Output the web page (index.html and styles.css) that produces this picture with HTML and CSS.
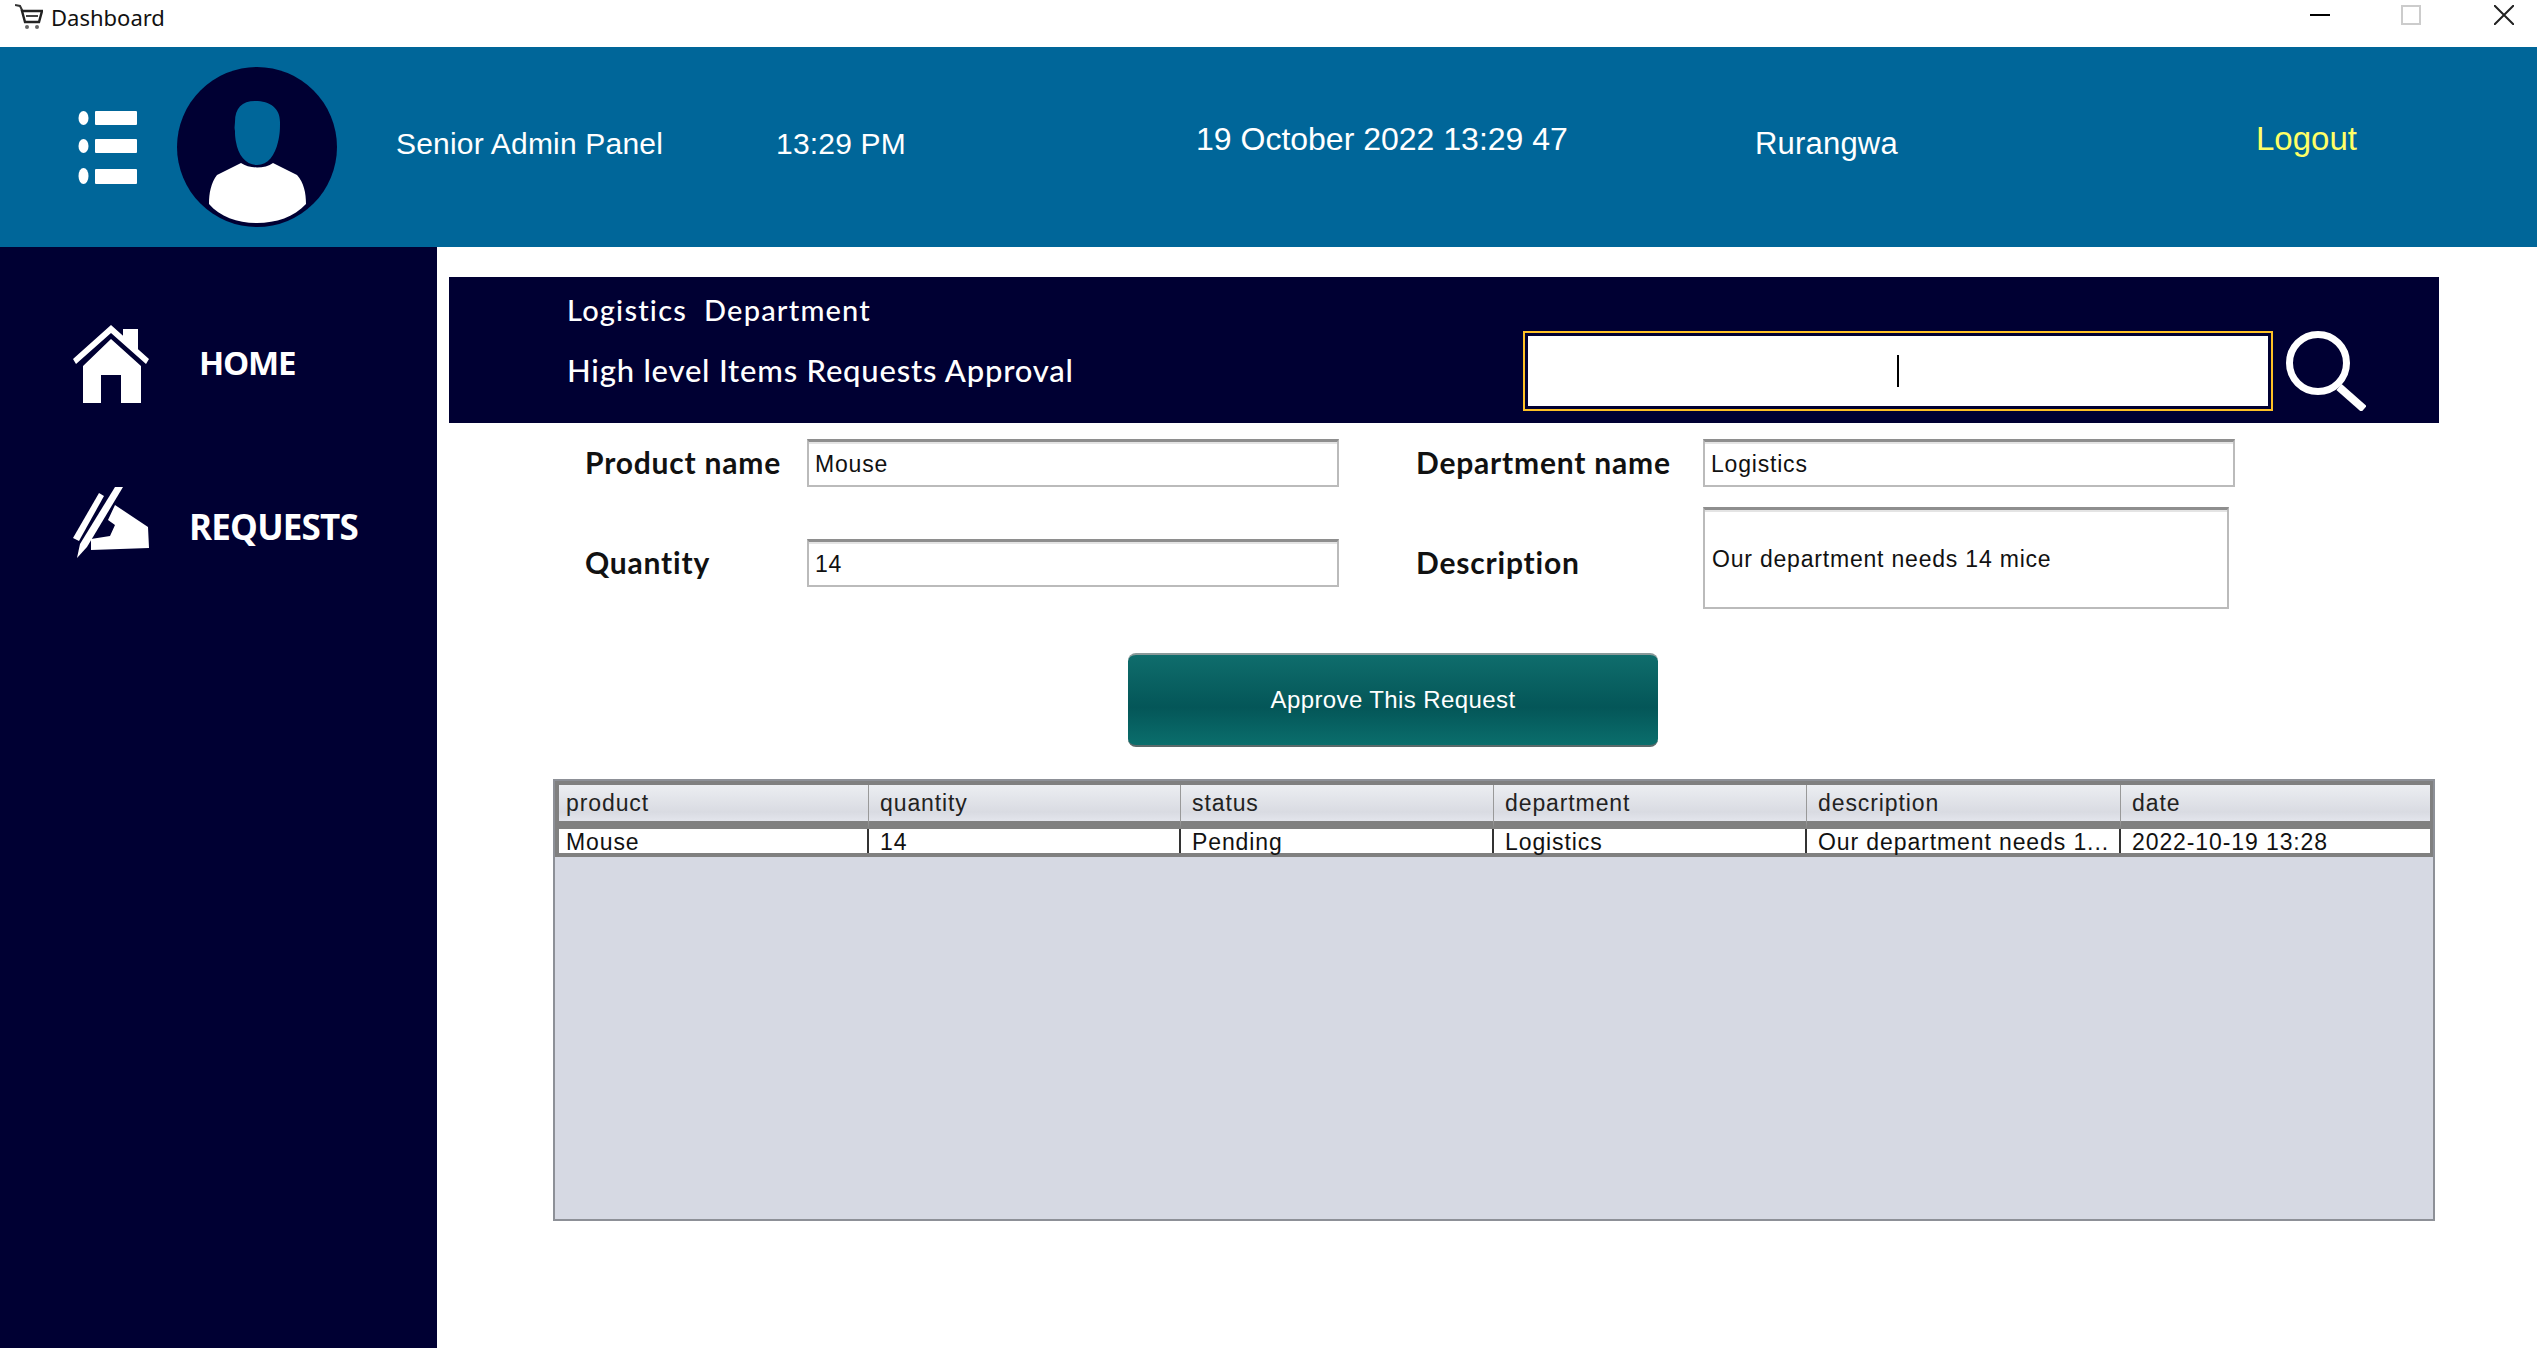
FILE: index.html
```html
<!DOCTYPE html>
<html lang="en">
<head>
    <meta charset="UTF-8">
    <title>Dashboard</title>
    <link rel="stylesheet" href="styles.css">
</head>
<body>
    <div class="titlebar">
        <svg class="cart-icon" viewBox="0 0 28 25" width="28" height="25">
            <path d="M0 1l5 1 3 6" fill="none" stroke="#333" stroke-width="2"/>
            <path d="M7 7h20l-3 11H10z" fill="none" stroke="#222" stroke-width="2.4"/>
            <path d="M11 11h12v2H11z" fill="#444"/>
            <circle cx="12" cy="23" r="2" fill="#666"/>
            <circle cx="22" cy="23" r="2" fill="#666"/>
        </svg>
        <span class="app-title">Dashboard</span>
        <div class="window-buttons">
            <svg viewBox="0 0 20 20" width="20" height="20"><path d="M0 10h20" stroke="#000" stroke-width="2"/></svg>
            <svg viewBox="0 0 20 20" width="20" height="20"><rect x="1" y="1" width="18" height="18" fill="none" stroke="#ccc" stroke-width="2"/></svg>
            <svg viewBox="0 0 20 20" width="20" height="20"><path d="M0 0l20 20M20 0L0 20" stroke="#222" stroke-width="2"/></svg>
        </div>
    </div>

    <header class="topbar">
        <svg class="menu-icon" viewBox="0 0 59 73" width="59" height="73">
            <g fill="#fff">
                <ellipse cx="5.5" cy="7" rx="5" ry="7"/><rect x="17" y="0" width="42" height="14" rx="1"/>
                <ellipse cx="5.5" cy="35" rx="5" ry="7"/><rect x="17" y="28" width="42" height="14" rx="1"/>
                <ellipse cx="5.5" cy="65" rx="5" ry="8"/><rect x="17" y="58" width="42" height="15" rx="1"/>
            </g>
        </svg>
        <svg class="avatar" viewBox="0 0 160 160" width="160" height="160">
            <circle cx="80" cy="80" r="80" fill="#000033"/>
            <path d="M64 96c8 6 24 6 32 0l24 12c7 8 9 18 9 29-12 13-30 19-49 19s-37-6-48-19c0-11 2-21 8-29z" fill="#fff"/>
            <path d="M78 34c15 0 25 7 25 21 0 7 0 12-2 20-3 13-10 23-21 23s-19-10-21-23c-1-6-1-8-1-11-1-4 0-6 0-9 0-14 7-21 20-21z" fill="#006699"/>
        </svg>
        <div class="top-text">Senior Admin Panel</div>
        <div class="top-text">13:29 PM</div>
        <div class="top-text raised date-text">19 October 2022 13:29 47</div>
        <div class="top-text name-text">Rurangwa</div>
        <div class="top-text raised logout">Logout</div>
    </header>

    <div class="main">
        <nav class="sidebar">
            <a class="nav-item">
                <svg viewBox="0 0 76 78" width="76" height="78">
                    <g fill="#fff">
                        <path d="M50 4h15v24L50 13z"/>
                        <path d="M0 34L38 0l38 34-3 5-35-31L3 39z"/>
                        <path d="M38 14l30 27v37H48V50H28v28H10V41z"/>
                    </g>
                </svg>
                <span class="nav-label home-label">HOME</span>
            </a>
            <a class="nav-item">
                <svg viewBox="0 0 76 71" width="76" height="71">
                    <g fill="#fff">
                        <path d="M26 6l5 3L6 54l-6-3z"/>
                        <path d="M42 0h8L14 60 4 71l3-14z"/>
                        <path d="M42 18l33 22 1 21-58 2 0-11 19-3 5-11-7-5z"/>
                    </g>
                </svg>
                <span class="nav-label requests-label">REQUESTS</span>
            </a>
        </nav>

        <section class="content">
            <div class="panel">
                <div class="panel-titles">
                    <div class="panel-title first-title">Logistics&nbsp; Department</div>
                    <div class="panel-title">High level Items Requests Approval</div>
                </div>
                <div class="search-box"><span class="caret"></span></div>
                <svg class="search-icon" viewBox="0 0 80 80" width="80" height="80">
                    <circle cx="32" cy="32" r="28.5" fill="none" stroke="#fff" stroke-width="7"/>
                    <path d="M53 56l25 22" stroke="#fff" stroke-width="8"/>
                </svg>
            </div>

            <div class="form-grid">
                <div class="field-label">Product name</div>
                <div class="field">Mouse</div>
                <div></div>
                <div class="field-label">Department name</div>
                <div class="field">Logistics</div>

                <div class="field-label low-label">Quantity</div>
                <div class="field qty-field">14</div>
                <div></div>
                <div class="field-label low-label">Description</div>
                <div class="field desc-field">Our department needs 14 mice</div>
            </div>

            <button class="approve-btn">Approve This Request</button>

            <div class="table-wrap">
                <table class="requests-table">
                    <thead>
                        <tr>
                            <th>product</th>
                            <th>quantity</th>
                            <th>status</th>
                            <th>department</th>
                            <th>description</th>
                            <th>date</th>
                        </tr>
                    </thead>
                    <tbody>
                        <tr>
                            <td><div class="cell">Mouse</div></td>
                            <td><div class="cell">14</div></td>
                            <td><div class="cell">Pending</div></td>
                            <td><div class="cell">Logistics</div></td>
                            <td><div class="cell">Our department needs 1...</div></td>
                            <td><div class="cell">2022-10-19 13:28</div></td>
                        </tr>
                    </tbody>
                </table>
            </div>
        </section>
    </div>
</body>
</html>
```

FILE: styles.css
```css
body {
    margin: 0;
    height: 1348px;
    overflow: hidden;
    background-color: #fff;
    font-family: "Liberation Sans", Arial, sans-serif;
}

/* window title */
.titlebar {
    height: 47px;
    display: flex;
    align-items: center;
    padding-left: 15px;
    position: relative;
}

.cart-icon {
    margin-top: -14px;
}

.app-title {
    font-family: "Noto Sans", sans-serif;
    font-size: 22px;
    color: #111;
    margin-left: 8px;
    margin-top: -13px;
}

.window-buttons {
    margin-left: auto;
    margin-right: 23px;
    margin-top: -17px;
    display: flex;
    gap: 71px;
}

.window-buttons svg:nth-child(2) {
    margin-right: 2px;
}

/* blue header */
.topbar {
    height: 200px;
    background-color: #006699;
    display: grid;
    grid-template-columns: 99px 219px 380px 420px 559px 501px 1fr;
    align-items: center;
    padding-left: 78px;
    box-sizing: border-box;
}

.top-text {
    color: #fff;
    font-size: 30px;
    letter-spacing: 0.2px;
    padding-bottom: 6px;
    white-space: nowrap;
}

.raised {
    padding-bottom: 16px;
}

.date-text {
    font-size: 32px;
    letter-spacing: 0;
}

.name-text {
    font-size: 31px;
}

.logout {
    color: #ffff66;
    font-size: 33px;
    letter-spacing: 0;
}

.main {
    display: flex;
    height: 1101px;
}

/* left menu */
.sidebar {
    width: 437px;
    background-color: #000033;
    box-sizing: border-box;
    padding-top: 78px;
    padding-left: 73px;
}

.nav-item {
    display: flex;
    align-items: center;
    color: #fff;
    height: 78px;
    margin-bottom: 80px;
}

.nav-label {
    font-family: "Open Sans", sans-serif;
    font-weight: 700;
    font-size: 35px;
}

.home-label {
    margin-left: 50px;
    padding-bottom: 3px;
    font-size: 33px;
    letter-spacing: -1.2px;
}

.requests-label {
    margin-left: 40px;
    padding-top: 9px;
    letter-spacing: -0.8px;
}

/* content */
.content {
    flex: 1;
    padding: 30px 0 0 9px;
}

.panel {
    width: 1990px;
    height: 146px;
    margin-left: 3px;
    background-color: #000033;
    display: flex;
    box-sizing: border-box;
    padding-left: 118px;
}

.panel-titles {
    width: 956px;
    padding-top: 3px;
}

.panel-title {
    font-family: Lato, sans-serif;
    color: #fff;
    font-size: 31px;
    font-weight: 500;
    line-height: 60px;
    letter-spacing: 0.8px;
    white-space: nowrap;
}

.first-title {
    font-size: 29px;
    letter-spacing: 1.2px;
}

.search-box {
    width: 750px;
    height: 80px;
    margin-top: 54px;
    background-color: #fff;
    border: 2px solid #ffc125;
    outline: 3px solid #000033;
    outline-offset: -5px;
    box-sizing: border-box;
    display: flex;
    align-items: center;
    justify-content: center;
}

.caret {
    width: 2px;
    height: 32px;
    background-color: #000;
}

.search-icon {
    margin-left: 13px;
    margin-top: 54px;
}

.form-grid {
    display: grid;
    grid-template-columns: 222px 532px 77px 287px 532px;
    grid-template-rows: 48px 102px;
    row-gap: 20px;
    align-items: center;
    margin: 16px 0 0 139px;
}

.field-label {
    font-family: Lato, sans-serif;
    font-weight: 700;
    font-size: 30px;
    letter-spacing: 0.8px;
    color: #111;
    white-space: nowrap;
    padding-bottom: 3px;
}

.low-label {
    padding-bottom: 0;
    padding-top: 7px;
}

.field {
    height: 48px;
    box-sizing: border-box;
    border: 2px solid #bbb;
    border-top: 3px solid #8e8e8e;
    box-shadow: inset 0 2px 0 #e4e4e4;
    padding-left: 6px;
    padding-top: 2px;
    font-size: 23px;
    letter-spacing: 0.8px;
    color: #111;
    display: flex;
    align-items: center;
}

.qty-field {
    align-self: start;
    margin-top: 32px;
}

.desc-field {
    height: 102px;
    width: 526px;
    padding-left: 7px;
}

.approve-btn {
    display: block;
    width: 530px;
    height: 94px;
    margin: 44px 0 0 682px;
    border: none;
    border-top: 2px solid #8a9a9a;
    border-bottom: 2px solid #5a6a6a;
    border-radius: 8px;
    background: linear-gradient(#0f6d6c, #045658 58%, #0a6e6c);
    color: #fff;
    font-family: "Liberation Sans", Arial, sans-serif;
    font-size: 24px;
    letter-spacing: 0.4px;
}

.table-wrap {
    width: 1882px;
    height: 442px;
    margin: 32px 0 0 107px;
    box-sizing: border-box;
    border: 2px solid #8d9097;
    background-color: #d6d9e3;
}

.requests-table {
    width: 100%;
    table-layout: fixed;
    border-collapse: separate;
    border-spacing: 0;
    background-color: #808080;
    padding: 4px 3px 4px 4px;
    font-size: 23px;
    letter-spacing: 0.9px;
    color: #222;
}

.requests-table th:nth-child(1) { width: 310px; }
.requests-table th:nth-child(2) { width: 312px; }
.requests-table th:nth-child(3) { width: 313px; }
.requests-table th:nth-child(4) { width: 313px; }
.requests-table th:nth-child(5) { width: 314px; }

.requests-table th {
    box-sizing: border-box;
    height: 36px;
    padding: 0 0 0 11px;
    font-weight: normal;
    text-align: left;
    background: linear-gradient(#eceef2, #d9dbe2 75%, #e3e5ec);
    border-right: 1px solid #999;
    border-bottom: 8px solid #808080;
    white-space: nowrap;
}

.requests-table thead tr {
    height: 44px;
}

.requests-table td {
    box-sizing: border-box;
    height: 24px;
    padding: 0 0 0 11px;
    background-color: #fff;
    color: #111;
    border-right: 2px solid #333;
    white-space: nowrap;
}

.requests-table th:first-child,
.requests-table td:first-child {
    padding-left: 7px;
}

.requests-table th:last-child,
.requests-table td:last-child {
    border-right: none;
}

.cell {
    height: 24px;
    line-height: 27px;
}
```
